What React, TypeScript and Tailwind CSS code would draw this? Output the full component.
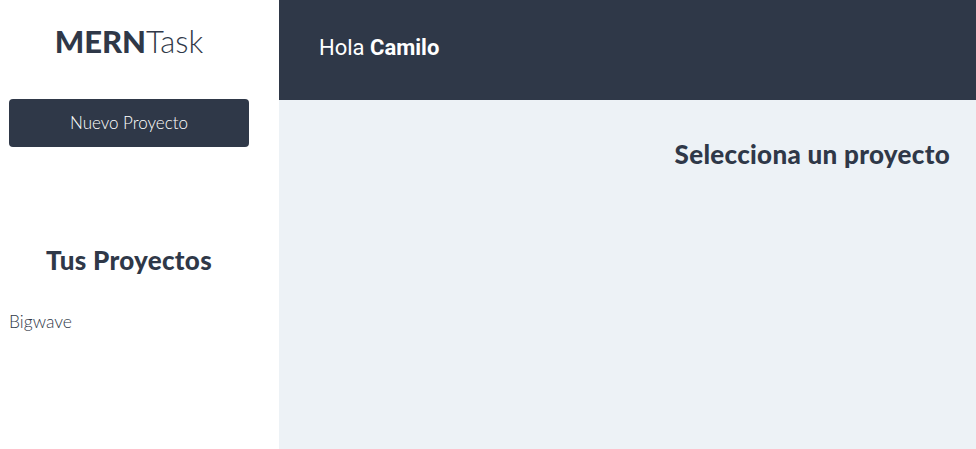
export default function App() {
  const raleway = { fontFamily: '"Lato", "Open Sans", sans-serif' };
  return (
    <div className="flex h-[449px] w-[976px] overflow-hidden bg-white" style={raleway}>
      <aside className="flex w-[279px] shrink-0 flex-col bg-white">
        <div className="w-[240px] ml-[9px] flex flex-col">
          <h1 className="mt-[23px] text-center text-[31px] leading-[36px] text-[#2f3848]">
            <span className="font-black">MERN</span>
            <span className="font-light">Task</span>
          </h1>
          <button className="mt-[40px] h-[48px] w-[240px] rounded-[4px] bg-[#2f3848] text-[17px] font-light text-white">
            Nuevo Proyecto
          </button>
          <h2 className="mt-[98px] text-center text-[26px] font-black leading-[30px] tracking-[0.3px] text-[#2f3848]">
            Tus Proyectos
          </h2>
          <ul className="mt-[37px]">
            <li className="text-[17.5px] font-light leading-[20px] text-[#2f3848]">Bigwave</li>
          </ul>
        </div>
      </aside>
      <main className="flex flex-1 flex-col bg-[#edf2f6]">
        <header className="flex h-[100px] items-center bg-[#2f3848] pl-[40px] pb-[6px]">
          <p className="text-[22px] text-white" style={{ fontFamily: 'Roboto, sans-serif' }}>
            Hola <span className="font-bold">Camilo</span>
          </p>
        </header>
        <h2 className="mt-[39px] pr-[26px] text-right text-[26px] font-black leading-[30px] tracking-[0.3px] text-[#2f3848]">
          Selecciona un proyecto
        </h2>
      </main>
    </div>
  );
}
